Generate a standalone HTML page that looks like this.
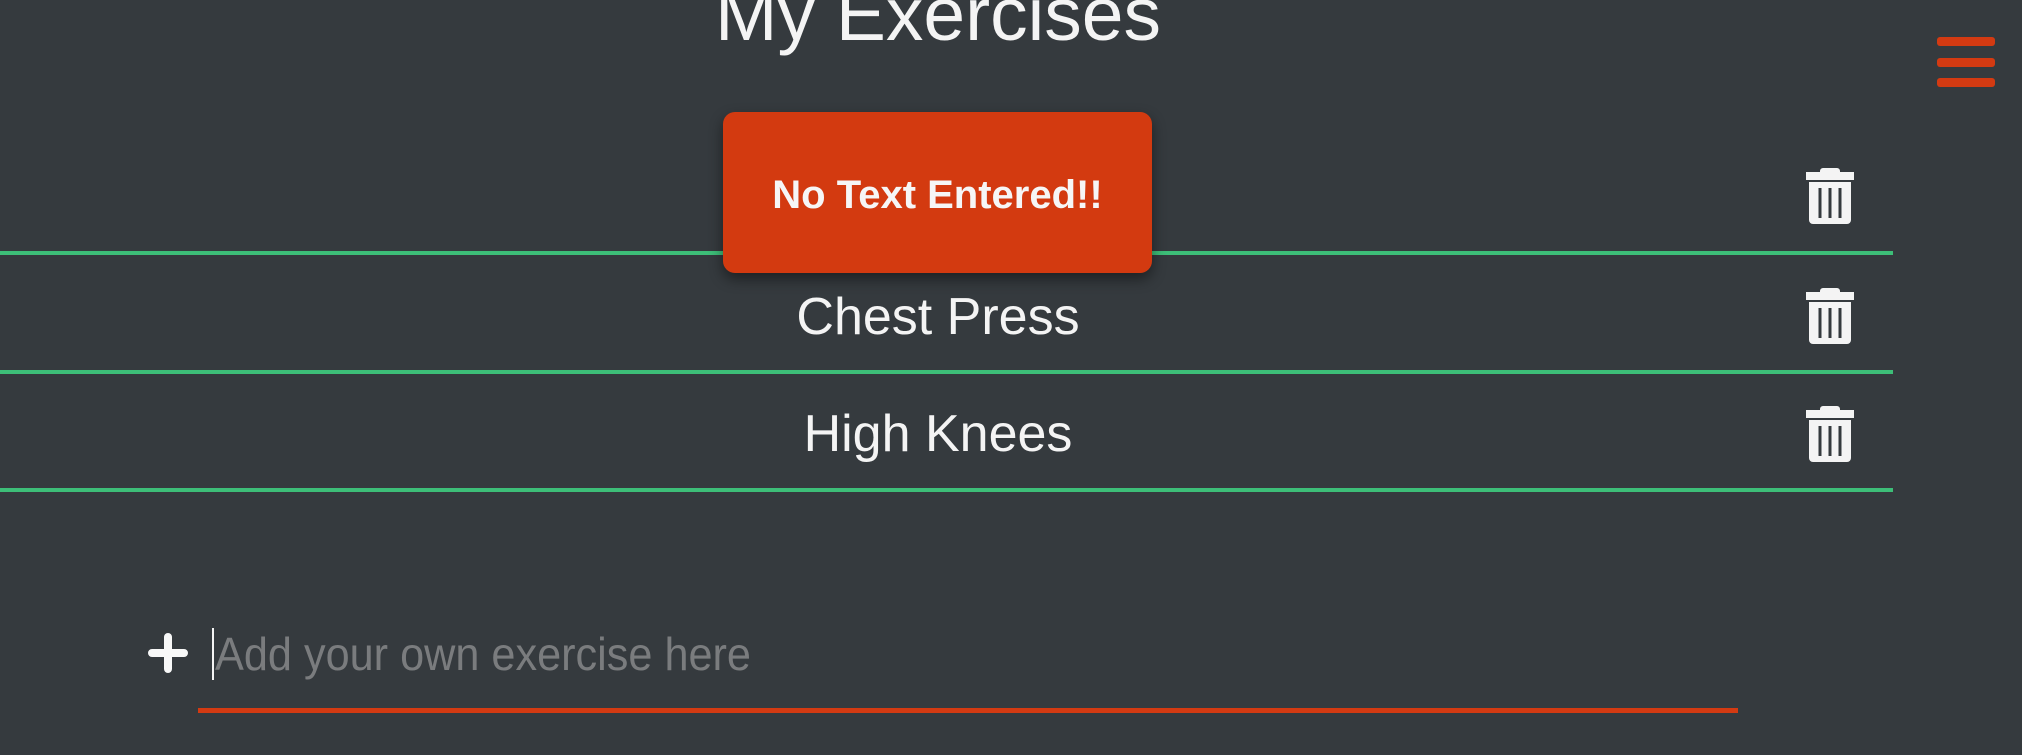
<!DOCTYPE html>
<html><head><meta charset="utf-8"><style>
html,body{margin:0;padding:0;}
body{width:2022px;height:755px;background:#353a3e;position:relative;overflow:hidden;font-family:"Liberation Sans",Arial,sans-serif;color:#f4f4f4;}
.abs{position:absolute;}
.title{left:0;width:1876px;text-align:center;top:-32px;font-size:75px;line-height:92px;}
.line{left:0;width:1893px;height:4px;background:#3dbe78;}
.row{left:0;width:1876px;text-align:center;font-size:52px;line-height:60px;}
.trash{left:1806px;width:48px;height:56px;}
.bar{left:1937px;width:58px;height:9px;border-radius:3px;background:#d33a12;}
.toast{left:723px;top:112px;width:429px;height:161px;background:#d33a10;border-radius:12px;box-shadow:0 6px 14px rgba(0,0,0,0.45);text-align:center;font-weight:bold;font-size:40px;line-height:166px;color:#f6f6f6;}
</style></head><body>
<div class="abs title">My Exercises</div>

<div class="abs line" style="top:251px"></div>
<div class="abs line" style="top:370px"></div>
<div class="abs line" style="top:488px"></div>

<div class="abs row" style="top:287px">Chest Press</div>
<div class="abs row" style="top:404px">High Knees</div>

<svg class="abs trash" style="top:168px" viewBox="0 0 48 56"><path d="M0 4h48v8H0z M17 0h14a3 3 0 0 1 3 3v1H14V3a3 3 0 0 1 3-3z M3 14h42v38a4 4 0 0 1-4 4H7a4 4 0 0 1-4-4z" fill="#f4f4f4"/><path d="M14 20v30M24 20v30M34 20v30" stroke="#353a3e" stroke-width="3"/></svg>
<svg class="abs trash" style="top:288px" viewBox="0 0 48 56"><path d="M0 4h48v8H0z M17 0h14a3 3 0 0 1 3 3v1H14V3a3 3 0 0 1 3-3z M3 14h42v38a4 4 0 0 1-4 4H7a4 4 0 0 1-4-4z" fill="#f4f4f4"/><path d="M14 20v30M24 20v30M34 20v30" stroke="#353a3e" stroke-width="3"/></svg>
<svg class="abs trash" style="top:406px" viewBox="0 0 48 56"><path d="M0 4h48v8H0z M17 0h14a3 3 0 0 1 3 3v1H14V3a3 3 0 0 1 3-3z M3 14h42v38a4 4 0 0 1-4 4H7a4 4 0 0 1-4-4z" fill="#f4f4f4"/><path d="M14 20v30M24 20v30M34 20v30" stroke="#353a3e" stroke-width="3"/></svg>

<div class="abs bar" style="top:37px"></div>
<div class="abs bar" style="top:58px"></div>
<div class="abs bar" style="top:78px"></div>

<div class="abs toast">No Text Entered!!</div>

<svg class="abs" style="left:147px;top:632px" width="42" height="42" viewBox="0 0 42 42"><path d="M21 5v32M5 21h32" stroke="#f8f8f8" stroke-width="8" stroke-linecap="round"/></svg>
<div class="abs" style="left:212px;top:628px;width:2px;height:52px;background:#f4f4f4"></div>
<div class="abs" style="left:215px;top:624px;font-size:46px;line-height:60px;color:#7a7c7e;transform:scaleX(0.94);transform-origin:0 0;white-space:nowrap">Add your own exercise here</div>
<div class="abs" style="left:198px;top:708px;width:1540px;height:5px;background:#d33a12"></div>
</body></html>
